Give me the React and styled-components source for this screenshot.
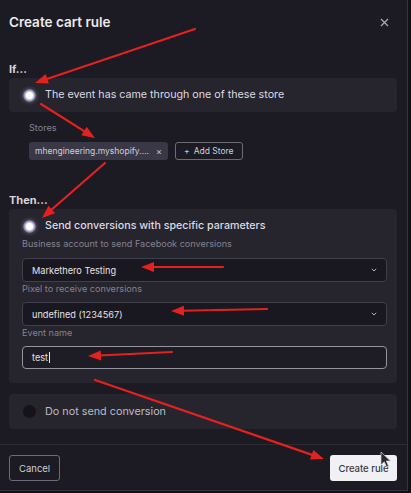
import React from 'react'
import styled, { createGlobalStyle, css } from 'styled-components'

const GlobalStyle = createGlobalStyle`
  html, body {
    margin: 0;
    padding: 0;
    background: #121116;
    font-family: Inter, "Noto Sans", "Liberation Sans", sans-serif;
  }
`

const Dialog = styled.div`
  position: relative;
  width: 408px;
  height: 491px;
  box-sizing: border-box;
  background: #1c1a22;
  border-right: 1px solid #35333d;
  border-bottom: 1px solid #35333d;
  display: flex;
  flex-direction: column;
  overflow: hidden;
`

const Header = styled.div`
  height: 44px;
  display: flex;
  align-items: center;
  justify-content: space-between;
  padding: 0 18px 0 9px;
`

const Title = styled.h2`
  margin: 0;
  font-size: 13.5px;
  font-weight: 600;
  color: #ebebee;
`

const Close = styled.span`
  display: flex;
  width: 9px;
  height: 9px;
`

const Body = styled.div`
  flex: 1;
  padding: 18px 10px 0 9px;
`

const SectionLabel = styled.div`
  margin: ${p => p.$top || 0}px 0 2px 0;
  font-size: 11px;
  line-height: 14px;
  font-weight: 700;
  color: #d6d5da;
`

const Card = styled.div`
  background: #26242d;
  border-radius: 4px;
  margin-top: ${p => p.$top || 0}px;
  padding: ${p => p.$pad || '0'};
`

const RadioRow = styled.label`
  display: flex;
  align-items: center;
  gap: 9px;
  padding: ${p => p.$pad};
  padding-left: ${p => p.$indent}px;
  font-size: ${p => p.$size || 10.7}px;
  line-height: 14px;
  font-weight: ${p => (p.$strong ? 500 : 400)};
  color: ${p => (p.$dim ? '#bdbcc4' : '#dcdbe2')};
`

const Radio = styled.span`
  width: 13px;
  height: 13px;
  border-radius: 50%;
  flex-shrink: 0;
  ${p =>
    p.$checked
      ? css`
          background: radial-gradient(circle, #ffffff 0 3px, #e6e3f5 3.6px, #a29dbe 5px, #6f6b8a 6.5px);
          box-shadow: 0 0 4px rgba(190, 185, 225, 0.5);
        `
      : css`
          background: #141319;
        `}
`

const Stores = styled.div`
  padding: 10px 0 0 20px;
`

const FieldLabel = styled.div`
  font-size: 9.1px;
  line-height: 12px;
  color: #85838f;
  margin: ${p => p.$top || 0}px 0 ${p => (p.$bottom === undefined ? 7 : p.$bottom)}px;
`

const ChipRow = styled.div`
  display: flex;
  gap: 7px;
`

const Chip = styled.div`
  width: 139px;
  height: 18px;
  box-sizing: border-box;
  border-radius: 3px;
  background: #3a3846;
  display: flex;
  align-items: center;
  justify-content: space-between;
  padding: 0 6px;
  font-size: 8.5px;
  color: #d0cfd6;
`

const ChipX = styled.span`
  font-size: 9px;
  color: #c7c6cd;
`

const OutlineButton = styled.button`
  height: ${p => p.$h || 18}px;
  box-sizing: border-box;
  border: 1px solid #6d6b76;
  border-radius: 3px;
  background: transparent;
  color: #cfced5;
  font-family: inherit;
  font-size: ${p => p.$size || 8.5}px;
  display: flex;
  align-items: center;
  gap: 4px;
  padding: 0 ${p => p.$px || 8}px;
`

const Select = styled.div`
  height: ${p => p.$h || 24}px;
  box-sizing: border-box;
  border: 1px solid ${p => (p.$focus ? '#9694a0' : '#403e4a')};
  border-radius: 4px;
  background: ${p => (p.$focus ? '#1e1c25' : '#19171f')};
  display: flex;
  align-items: center;
  justify-content: space-between;
  padding: 0 9px 0 9px;
  font-size: 9.2px;
  color: #e4e3e8;
`

const Caret = styled.span`
  display: inline-block;
  width: 1px;
  height: 11px;
  margin-left: 0.5px;
  vertical-align: -2px;
  background: #e8e8ec;
`

const Footer = styled.div`
  height: 46px;
  box-sizing: border-box;
  border-top: 1px solid #2d2b34;
  display: flex;
  align-items: center;
  justify-content: space-between;
  padding: 1px 10px 0 9px;
`

const PrimaryButton = styled.button`
  width: 67px;
  height: 26px;
  border: none;
  border-radius: 3px;
  background: #f1f1f3;
  color: #3a3940;
  font-family: inherit;
  font-size: 9.5px;
  font-weight: 500;
  padding: 0;
`

const Overlay = styled.svg`
  position: absolute;
  left: 0;
  top: 0;
  pointer-events: none;
`

const arrows = [
  [195, 29, 35, 83],
  [41, 104, 95, 138],
  [105, 163, 42, 218],
  [223, 267, 141, 267],
  [267, 309, 171, 311],
  [172, 352, 88, 356],
  [95, 380, 324, 459],
]

function Arrow({ x1, y1, x2, y2 }) {
  const dx = x2 - x1
  const dy = y2 - y1
  const len = Math.hypot(dx, dy)
  const ux = dx / len
  const uy = dy / len
  const hl = 13
  const hw = 5
  const bx = x2 - ux * hl
  const by = y2 - uy * hl
  const pts = [
    [x2, y2],
    [bx - uy * hw, by + ux * hw],
    [bx + uy * hw, by - ux * hw],
  ]
  return (
    <g>
      <line x1={x1} y1={y1} x2={bx + ux * 2} y2={by + uy * 2} stroke="#e3221f" strokeWidth="2.2" strokeLinecap="round" />
      <polygon points={pts.map(p => p.join(',')).join(' ')} fill="#e3221f" />
    </g>
  )
}

function Chevron() {
  return (
    <svg width="6" height="4" viewBox="0 0 6 4">
      <path d="M0.8 0.8 L3 3 L5.2 0.8" fill="none" stroke="#b3b1bb" strokeWidth="1" />
    </svg>
  )
}

export default function App() {
  return (
    <>
      <GlobalStyle />
      <Dialog>
        <Header>
          <Title>Create cart rule</Title>
          <Close>
            <svg width="9" height="9" viewBox="0 0 9 9">
              <path d="M1 1 L8 8 M8 1 L1 8" stroke="#a9a8b0" strokeWidth="1.3" />
            </svg>
          </Close>
        </Header>

        <Body>
          <SectionLabel>If...</SectionLabel>
          <Card>
            <RadioRow $pad="10px 0" $indent={14}>
              <Radio $checked />
              The event has came through one of these store
            </RadioRow>
          </Card>
          <Stores>
            <FieldLabel $bottom={8}>Stores</FieldLabel>
            <ChipRow>
              <Chip>
                mhengineering.myshopify....
                <ChipX>×</ChipX>
              </Chip>
              <OutlineButton>
                <span>+</span> Add Store
              </OutlineButton>
            </ChipRow>
          </Stores>

          <SectionLabel $top={33}>Then...</SectionLabel>
          <Card $pad="10px 10px 14px 13px">
            <RadioRow $pad="0 0 5px" $indent={1} $strong>
              <Radio $checked />
              Send conversions with specific parameters
            </RadioRow>
            <FieldLabel $bottom={8}>Business account to send Facebook conversions</FieldLabel>
            <Select>
              Markethero Testing
              <Chevron />
            </Select>
            <FieldLabel $top={1}>Pixel to receive conversions</FieldLabel>
            <Select>
              undefined (1234567)
              <Chevron />
            </Select>
            <FieldLabel $top={1}>Event name</FieldLabel>
            <Select $h={23} $focus>
              <span>
                test
                <Caret />
              </span>
            </Select>
          </Card>

          <Card $top={11}>
            <RadioRow $pad="10.5px 0" $indent={14} $size={10.8} $dim>
              <Radio />
              Do not send conversion
            </RadioRow>
          </Card>
        </Body>

        <Footer>
          <OutlineButton $h={26} $px={9} $size={9.5}>
            Cancel
          </OutlineButton>
          <PrimaryButton>Create rule</PrimaryButton>
        </Footer>

        <Overlay width="408" height="491" viewBox="0 0 408 491">
          {arrows.map(([x1, y1, x2, y2], i) => (
            <Arrow key={i} x1={x1} y1={y1} x2={x2} y2={y2} />
          ))}
          <path
            d="M381 452 L381 465 L384.2 461.8 L386.6 467 L388.6 466.1 L386.3 461 L390.6 461 Z"
            fill="#2a2a30"
            stroke="#d8d8dc"
            strokeWidth="0.7"
          />
        </Overlay>
      </Dialog>
    </>
  )
}
